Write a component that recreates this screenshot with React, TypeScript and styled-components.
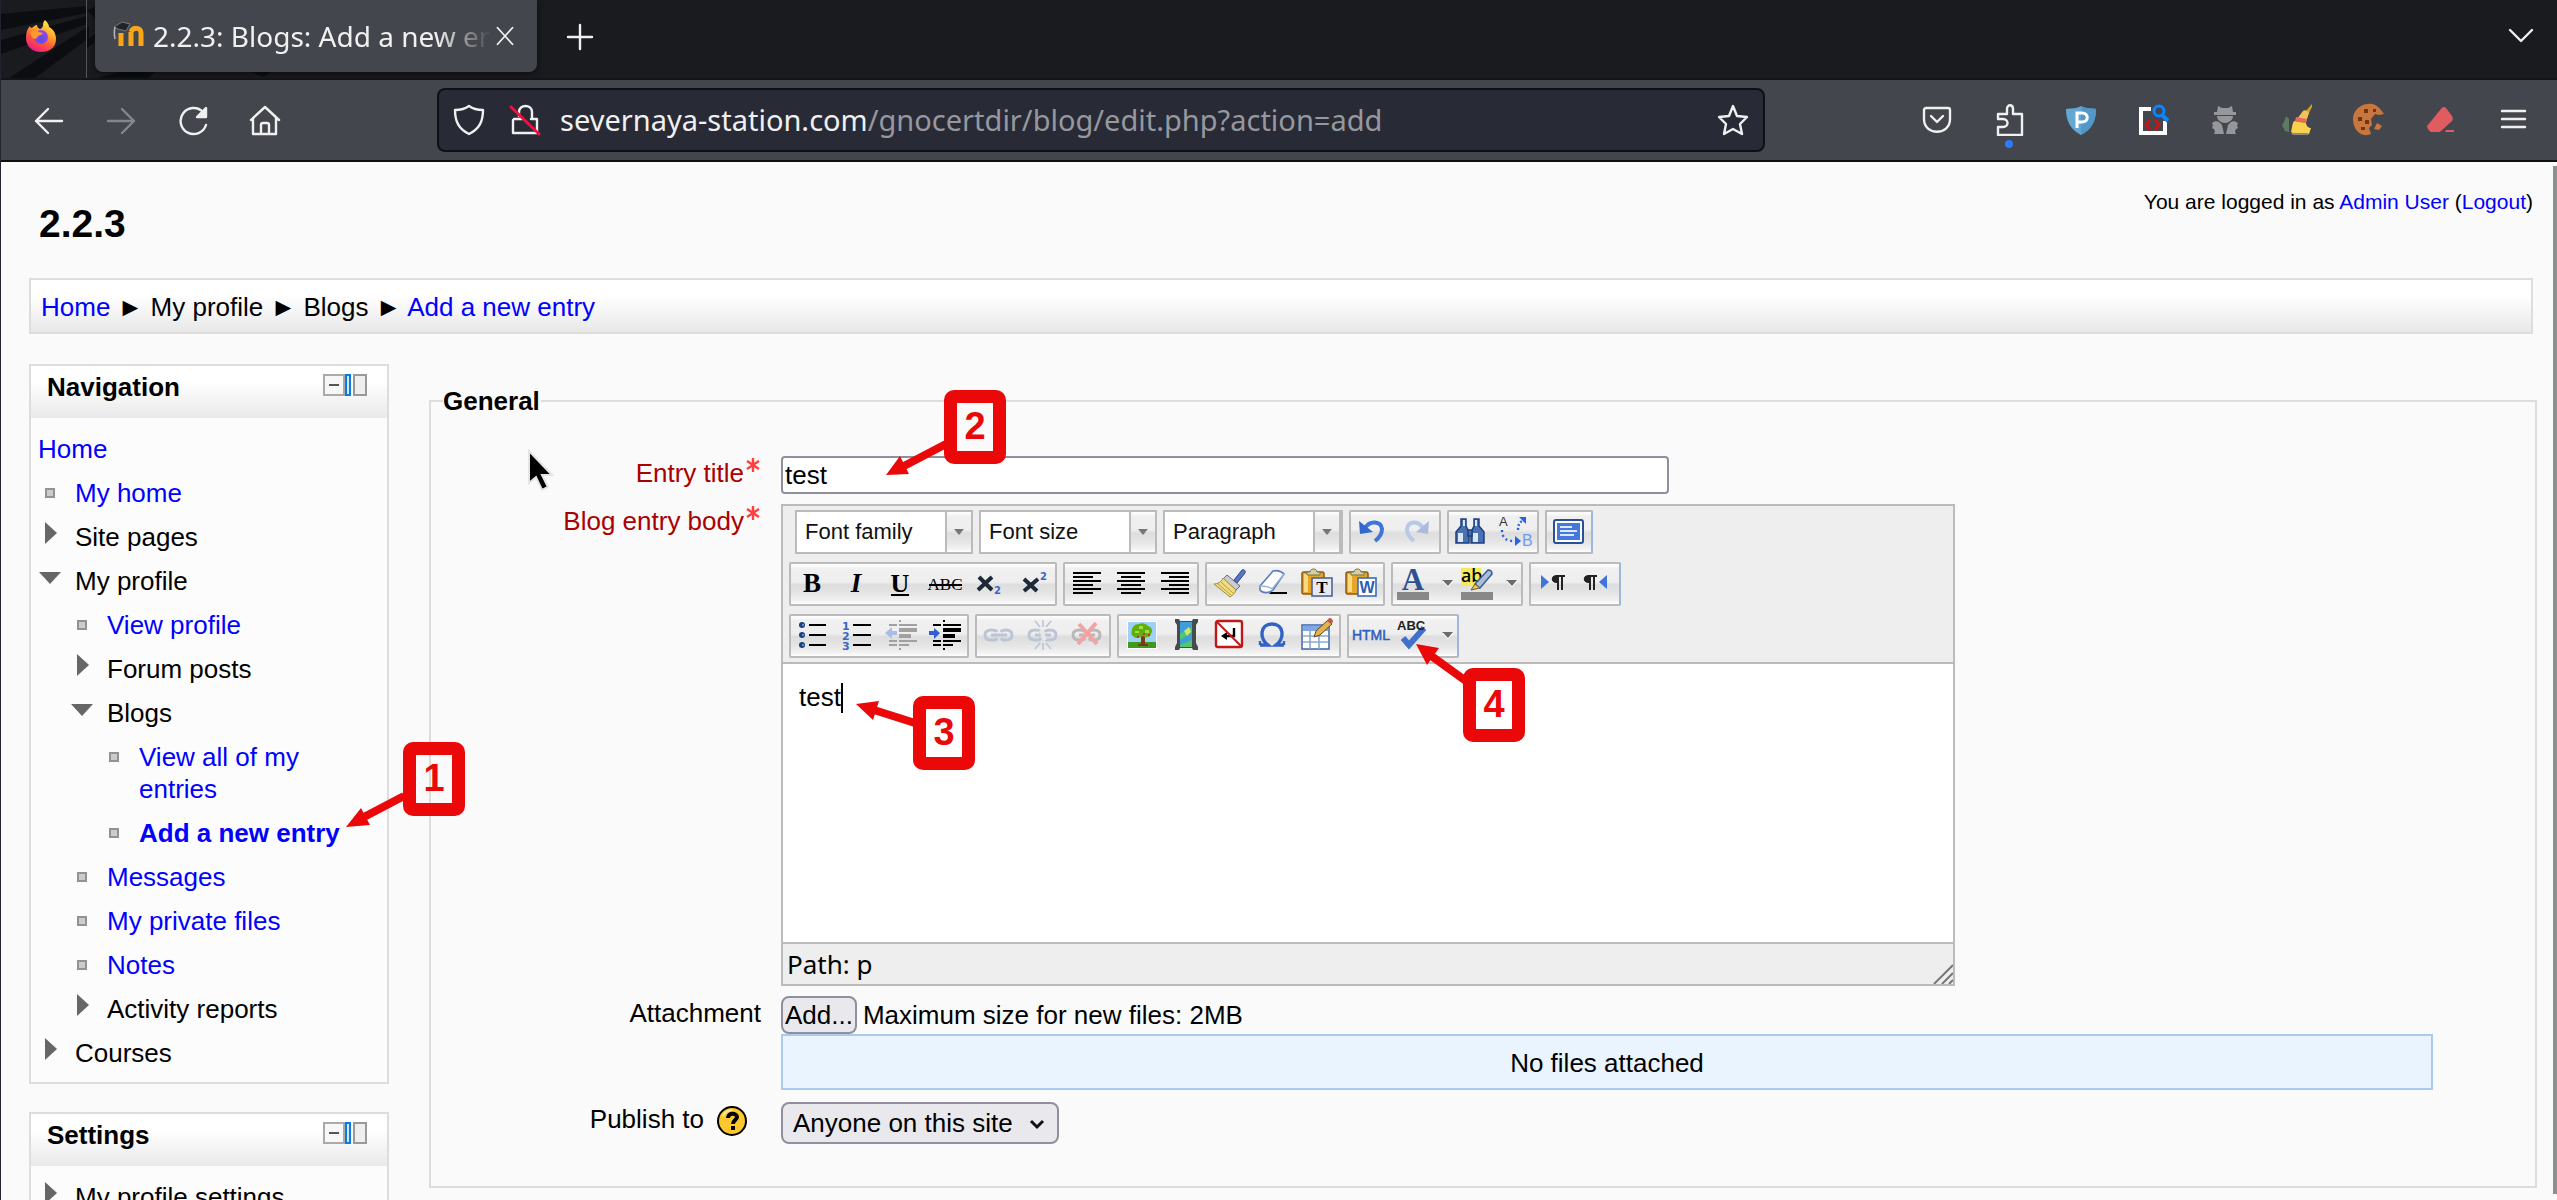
import React from "react";
import styled, { createGlobalStyle, css } from "styled-components";

const GlobalStyle = createGlobalStyle`
  *, *::before, *::after { box-sizing: border-box; }
  body { margin: 0; background: #fafafa; }
  button, input, select, textarea { font: inherit; color: inherit; margin: 0; }
`;

const sans = `"Liberation Sans", Arial, sans-serif`;
const ui = `"Noto Sans", "Open Sans", sans-serif`;

/* ---------- browser window ---------- */

const Window = styled.div`
  position: relative;
  display: flex;
  flex-direction: column;
  height: 100vh;
  overflow: hidden;
  border-left: 1px solid #23222f;
  background: #fafafa;
  font: 26px/32px ${sans};
  color: #000;
`;

const TabStrip = styled.div`
  position: relative;
  display: flex;
  flex: none;
  height: 80px;
  background: #1a1b1f;
  border-bottom: 2px solid #131418;
  color: #f0f0f0;
`;

const Wallpaper = styled.svg`
  position: absolute;
  left: 0;
  top: 0;
`;

const BrandCell = styled.div`
  position: relative;
  display: flex;
  align-items: center;
  justify-content: center;
  width: 86px;
  padding: 0 6px 6px 0;
  border-right: 1px solid #55565c;
`;

const Tab = styled.div`
  position: relative;
  display: flex;
  align-items: center;
  width: 442px;
  height: 72px;
  margin-left: 8px;
  padding: 0 18px;
  border-radius: 0 0 8px 8px;
  background: #44464d;
  box-shadow: 0 2px 6px #00000080;
`;

const TabTitle = styled.span`
  flex: 1;
  min-width: 0;
  margin-left: 8px;
  overflow: hidden;
  white-space: nowrap;
  font: 28px/40px ${ui};
  mask-image: linear-gradient(to right, #000 84%, transparent);
`;

const ChromeButton = styled.button<{ $w?: number }>`
  position: relative;
  display: flex;
  flex: none;
  align-items: center;
  justify-content: center;
  width: ${(p) => p.$w ?? 72}px;
  height: 72px;
  padding: 0;
  border: 0;
  background: none;
  color: #f0f0f0;

  &:disabled { color: #85868b; }
`;

const Spring = styled.span`
  flex: 1;
`;

const NavBar = styled.div`
  display: flex;
  flex: none;
  align-items: center;
  height: 82px;
  padding: 0 8px 0 12px;
  background: #44464d;
  border-bottom: 2px solid #0f1014;
`;

const AddressBar = styled.div`
  display: flex;
  flex: 1 1 auto;
  align-items: center;
  height: 64px;
  margin: 0 136px;
  padding: 0 14px;
  border: 2px solid #0f1014;
  border-radius: 8px;
  background: #282a36;
  color: #f0f0f0;
`;

const LockWrap = styled.span`
  display: flex;
  margin-left: 24px;
`;

const Url = styled.div`
  flex: 1;
  margin-left: 19px;
  font: 29px/40px ${ui};
  white-space: nowrap;

  span { color: #97989e; }
`;

const Actions = styled.div`
  display: flex;
`;

const ActiveDot = styled.i`
  position: absolute;
  bottom: 8px;
  left: 32px;
  width: 8px;
  height: 8px;
  border-radius: 50%;
  background: #2a7bff;
`;

const ScrollThumb = styled.div`
  position: absolute;
  top: 166px;
  right: 0;
  bottom: 6px;
  width: 4px;
  background: #8b908f;
`;

/* ---------- page ---------- */

const Link = styled.a<{ $bold?: boolean }>`
  color: #00f;
  text-decoration: none;
  font-weight: ${(p) => (p.$bold ? 700 : 400)};
`;

const PageHeader = styled.header`
  display: flex;
  flex: none;
  justify-content: space-between;
  align-items: flex-start;
  height: 116px;
  padding: 28px 24px 0 38px;
`;

const SiteTitle = styled.h1`
  margin: 10px 0 0;
  font-size: 39px;
  line-height: 48px;
`;

const LoginInfo = styled.div`
  font-size: 21px;
  line-height: 24px;
`;

const Breadcrumb = styled.nav`
  flex: none;
  margin: 0 24px 0 28px;
  padding: 11px 10px 9px;
  border: 2px solid #ddd;
  background: linear-gradient(#fff 30%, #e8e8e8);
`;

const Columns = styled.div`
  display: flex;
  align-items: flex-start;
  gap: 40px;
  margin: 30px 20px 0 28px;
`;

const Sidebar = styled.aside`
  display: flex;
  flex: none;
  flex-direction: column;
  gap: 28px;
  width: 360px;
`;

const Block = styled.section`
  border: 2px solid #ddd;
  background: #fcfcfc;
`;

const BlockHeader = styled.div`
  display: flex;
  justify-content: space-between;
  align-items: flex-start;
  height: 52px;
  padding: 5px 20px 0 16px;
  background: linear-gradient(#fff 30%, #e9e9e9);
`;

const BlockTitle = styled.h2`
  margin: 0;
  font-size: 26px;
  line-height: 32px;
`;

const BlockTools = styled.div`
  display: flex;
  padding-top: 3px;
`;

const ToolButton = styled.button`
  display: block;
  height: 22px;
  padding: 0;
  border: 0;
  background: none;

  svg { display: block; }
`;

const Tree = styled.ul`
  margin: 0;
  padding: 9px 9px 7px 7px;
  list-style: none;
`;

const TreeRow = styled.li<{ $level: number }>`
  display: flex;
  gap: 14px;
  padding: 6px 24px 6px ${(p) => Math.max(0, p.$level - 1) * 32}px;
`;

const Marker = styled.svg`
  flex: none;
  width: 22px;
  height: 32px;
  margin-left: 1px;
`;

/* ---------- form ---------- */

const Fieldset = styled.fieldset`
  flex: 1;
  min-width: 0;
  margin: 21px 0 0;
  padding: 39px 102px 42px 12px;
  border: 2px solid #ddd;
`;

const Legend = styled.legend`
  padding: 0 1px 0 0;
  font-weight: 700;
`;

const Form = styled.form`
  display: grid;
  grid-template-columns: 318px minmax(0, 1fr);
  gap: 10px 20px;
`;

const Label = styled.label<{ $required?: boolean }>`
  display: flex;
  justify-content: flex-end;
  gap: 2px;
  padding-top: 1px;
  color: ${(p) => (p.$required ? "#a00" : "#000")};
`;

const LabelCell = styled.div`
  display: flex;
  justify-content: flex-end;
  gap: 13px;
  padding-right: 14px;
`;

const HelpButton = styled.button`
  display: flex;
  height: 30px;
  margin-top: 4px;
  padding: 0;
  border: 0;
  background: none;
`;

const TextField = styled.input`
  width: 888px;
  max-width: 100%;
  height: 38px;
  padding: 0 2px;
  border: 2px solid #8f8f9d;
  border-radius: 4px;
  background: #fff;
`;

const Editor = styled.div`
  width: 1174px;
  max-width: 100%;
  border: 2px solid #bbb;
  background: #eee;
`;

const Toolbar = styled.div`
  display: flex;
  flex-direction: column;
  gap: 8px;
  padding: 4px 6px;
  border-bottom: 2px solid #bbb;
`;

const ToolRow = styled.div<{ $inset?: boolean }>`
  display: flex;
  gap: 6px;
  padding-left: ${(p) => (p.$inset ? 6 : 0)}px;
`;

const shade = css`
  background: linear-gradient(#fff, #f0f0f0 12%, #eee 45%, #ddd 52%, #e6e6e6 75%, #f2f2f2 92%, #fff);
`;

const Group = styled.div<{ $last?: boolean }>`
  display: flex;
  border: 2px solid #bbb;
  border-right-color: ${(p) => (p.$last ? "#9db8de" : "#bbb")};
  border-radius: 2px;
  ${shade}
`;

const IconButton = styled.button<{ $narrow?: boolean }>`
  display: block;
  width: ${(p) => (p.$narrow ? 20 : 44)}px;
  height: 40px;
  padding: 0;
  border: 0;
  background: none;

  svg {
    display: block;
    overflow: visible;
  }
`;

const ListBox = styled.div<{ $last?: boolean }>`
  display: grid;
  grid-template-columns: 1fr 26px;
  width: ${(p) => (p.$last ? 180 : 178)}px;
  height: 44px;
  border: 2px solid #bbb;
  border-right-width: ${(p) => (p.$last ? 4 : 2)}px;
  background: #fff;

  select {
    grid-area: 1 / 1 / 2 / 3;
    min-width: 0;
    padding: 0 0 0 8px;
    border: 0;
    background: none;
    appearance: none;
    font-size: 22px;
    color: #111;
  }
`;

const ListArrow = styled.span`
  grid-area: 1 / 2;
  display: flex;
  align-items: center;
  justify-content: center;
  border-left: 2px solid #bbb;
  pointer-events: none;
  ${shade}
`;

const Body = styled.div`
  height: 278px;
  padding: 17px 16px;
  background: #fff;
`;

const Caret = styled.i`
  display: inline-block;
  width: 2px;
  height: 30px;
  background: #000;
  vertical-align: -7px;
`;

const StatusBar = styled.div`
  display: flex;
  justify-content: space-between;
  align-items: flex-end;
  height: 42px;
  padding-left: 4px;
  border-top: 2px solid #bbb;
  font: 26px/40px ${ui};

  svg { display: block; }
`;

const FileArea = styled.div`
  padding-bottom: 2px;
`;

const FileRow = styled.div`
  display: flex;
  align-items: center;
  gap: 6px;
  height: 38px;
`;

const controlFace = css`
  border: 2px solid #8f8f9d;
  border-radius: 8px;
  background: #e9e9ed;
`;

const AddButton = styled.button`
  height: 38px;
  padding: 0 2px;
  ${controlFace}
`;

const FileList = styled.div`
  padding: 11px 10px 9px;
  border: 2px solid #a9cbee;
  background: #e9f4ff;
  text-align: center;
`;

const Picker = styled.div`
  display: grid;
  grid-template-columns: 1fr 42px;
  width: 278px;
  height: 42px;

  select {
    grid-area: 1 / 1 / 2 / 3;
    padding: 0 10px;
    appearance: none;
    ${controlFace}
  }
  svg {
    grid-area: 1 / 2;
    align-self: center;
    pointer-events: none;
  }
`;

/* ---------- callouts drawn over the page ---------- */

const Callout = styled.div<{ $x: number; $y: number }>`
  position: absolute;
  left: ${(p) => p.$x}px;
  top: ${(p) => p.$y}px;
  width: 62px;
  height: 74px;
  border: 13px solid #ea0808;
  border-radius: 10px;
  font-size: 38px;
  font-weight: 700;
  line-height: 46px;
  text-align: center;
  color: #ea0808;
`;

const Overlay = styled.svg<{ $x: number; $y: number }>`
  position: absolute;
  left: ${(p) => p.$x}px;
  top: ${(p) => p.$y}px;
  pointer-events: none;
`;

/* ---------- icons ---------- */

const line = { fill: "none", stroke: "currentColor", strokeWidth: 2.4, strokeLinecap: "round", strokeLinejoin: "round" } as const;

const Chrome = ({ children, size = 32 }: { children: React.ReactNode; size?: number }) => (
  <svg width={size} height={size} viewBox="0 0 32 32" aria-hidden="true" {...line}>{children}</svg>
);

const Firefox = () => (
  <svg width="34" height="34" viewBox="0 0 34 34" aria-hidden="true">
    <defs>
      <linearGradient id="ffBody" x1="0.8" y1="0" x2="0.3" y2="1">
        <stop offset="0" stopColor="#fff44f" />
        <stop offset="0.35" stopColor="#ffb02e" />
        <stop offset="0.65" stopColor="#ff5a36" />
        <stop offset="1" stopColor="#f0168b" />
      </linearGradient>
      <radialGradient id="ffGlobe" cx="0.5" cy="0.7" r="0.7">
        <stop offset="0" stopColor="#5b4fe0" />
        <stop offset="1" stopColor="#a044e8" />
      </radialGradient>
    </defs>
    <path d="M21 1c3 3 4 5 4 7 4 2 7 6 7 12 0 8-6 13-15 13S2 27 2 19c0-5 1-9 4-12 0 1 1 2 2 2 1-1 3-3 5-3 0 2 1 3 3 4 1 0 2-1 3-3 0-2 0-4 2-6z" fill="url(#ffBody)" />
    <circle cx="17" cy="18" r="7" fill="url(#ffGlobe)" />
    <path d="M7 12c3-2 6-1 8 1l4 1c-1 2-4 2-5 3-1 2-2 4-5 2-2-2-3-5-2-7z" fill="#ff9a2e" />
  </svg>
);

const MoodleMark = () => (
  <svg width="32" height="34" viewBox="0 0 32 34" aria-hidden="true" fill="none">
    <path d="M8 27V14M18 27V13M28 27V14c0-6-8-6-10-1" stroke="#f9a51a" strokeWidth="5" />
    <path d="M1 8l8-5 8 2-4 7-8-2z" fill="#222327" stroke="#777980" strokeWidth="1" />
    <path d="M2 8c-1 4-1 7 0 12" stroke="#b5b7bc" strokeWidth="1.5" />
  </svg>
);

const Tool = ({ w = 44, children }: { w?: number; children: React.ReactNode }) => (
  <svg width={w} height="40" viewBox={`0 0 ${w} 40`} aria-hidden="true">{children}</svg>
);

const serif = `"Liberation Serif", serif`;
const blue = "#2f5fc0";
const navy = "#1c3f80";

const Rows = ({ kind }: { kind: "left" | "center" | "right" }) => (
  <Tool>
    {[8, 12, 16, 20, 24, 28].map((y, i) => {
      const short = i % 2 === 1;
      const x = !short || kind === "left" ? 8 : kind === "center" ? 12 : 16;
      return <rect key={y} x={x} y={y} width={short ? 20 : 28} height="2" />;
    })}
  </Tool>
);

const Dent = ({ dir, muted }: { dir: "in" | "out"; muted?: boolean }) => (
  <Tool>
    <g fill={muted ? "#a0a0a0" : "#000"}>
      <path d="M20 4h2v2h-2zM10 8h8v2h-8zM20 8h18v2H20zM20 12h18v4H20zM20 18h12v4H20zM10 24h8v2h-8zM20 24h18v2H20zM10 28h8v2h-8zM20 28h10v2H20zM20 32h2v2h-2z" />
      <path
        d={dir === "in" ? "M6 15h5v-3l6 5-6 6v-4H6z" : "M18 15h-5v-4l-7 6 7 6v-4h5z"}
        fill={muted ? "#a9bce6" : "#2f5fd0"}
      />
    </g>
  </Tool>
);

const Chain = ({ color }: { color: string }) => (
  <g fill="none" stroke={color} strokeWidth="3">
    <path d="M20 16c-1-2-3-2-6-2-4 0-6 2-6 5s2 5 6 5 5 0 6-2M24 16c1-2 3-2 5-2 4 0 6 2 6 5s-2 5-6 5-4 0-5-2" />
    <path d="M14 19h16" />
  </g>
);

const Clipboard = ({ children }: { children: React.ReactNode }) => (
  <Tool>
    <rect x="7" y="8" width="22" height="22" rx="2" fill="#e5a62a" stroke="#8a5a12" strokeWidth="1.5" />
    <path d="M9 10h4v18H9z" fill="#f9d97b" />
    <path d="M12 11V8h3c0-4 7-4 7 0h3v3z" fill="#d8cf9c" stroke="#7a7148" />
    {children}
  </Tool>
);

const Undo = () => (
  <Tool>
    <path d="M14 16c5-8 16-7 17 1 0 5-3 9-7 12" fill="none" stroke="#3f74d8" strokeWidth="4" />
    <path d="M8 9l1 13 13-2z" fill="#3468cf" />
  </Tool>
);

const Redo = () => (
  <Tool>
    <path d="M28 16c-5-8-15-7-16 1 0 5 3 9 7 12" fill="none" stroke="#b8c8e6" strokeWidth="4" />
    <path d="M34 9l-1 13-12-2z" fill="#a9bce0" />
  </Tool>
);

const Find = () => (
  <Tool>
    <g fill="#4a72b0" stroke={navy} strokeWidth="1.5">
      <path d="M12 7h5v7l3 6v11H7V20l5-6zM25 7h5v7l5 6v11H22V20l3-6z" />
      <path d="M19 18h4v6h-4z" />
    </g>
    <path d="M9 21h5v9H9zM24 21h5v9h-5zM14 8h2v6h-2zM26 8h2v6h-2z" fill="#dbe7f8" />
  </Tool>
);

const Replace = () => (
  <Tool>
    <text x="6" y="14" fontFamily={sans} fontSize="13" fill="#333">A</text>
    <text x="29" y="34" fontFamily={sans} fontSize="16" fill="#6f9bef">B</text>
    <path d="M9 18c0 7 3 11 12 11" fill="none" stroke="#2a62e0" strokeWidth="2.4" strokeDasharray="2 3" />
    <path d="M25 18c0-4 1-7 4-9" fill="none" stroke="#2a62e0" strokeWidth="2.4" strokeDasharray="2 2" />
    <path d="M26 5h7v7zM22 24l6 5-6 5z" fill="#2a62e0" />
  </Tool>
);

const Fullscreen = () => (
  <Tool>
    <rect x="7" y="8" width="29" height="23" rx="2" fill="#fff" stroke="#274f9c" strokeWidth="2" />
    <rect x="10" y="11" width="23" height="17" fill="#4478dc" />
    <path d="M13 14h12v2H13zM13 18h17v2H13zM13 22h14v2H13z" fill="#dce8ff" />
  </Tool>
);

const Brush = () => (
  <Tool>
    <path d="M27 16l8-10c2-1 4 1 3 3l-8 10z" fill="#5577c8" stroke="#33457c" />
    <path d="M20 11l13 11-4 4-13-11z" fill="#c8ccd4" stroke="#666c78" />
    <path d="M16 14l13 12c-1 3-3 5-6 7L7 20c4 0 7-2 9-6z" fill="#f0dc84" stroke="#a08a36" />
    <path d="M11 20l13 11M14 18l12 11" stroke="#b89c3c" />
  </Tool>
);

const Eraser = () => (
  <Tool>
    <path d="M9 22L22 7c4-1 8 0 11 3L22 26c-4 4-11 3-13 0z" fill="#fff" stroke="#5b7fb8" strokeWidth="1.6" />
    <path d="M9 22c4 0 9 0 12 3L33 10" fill="none" stroke="#9bb5dc" strokeWidth="1.4" />
    <path d="M20 28h16v2H18z" />
  </Tool>
);

const BulletList = () => (
  <Tool>
    {[9, 19, 29].map((y) => (
      <g key={y}>
        <circle cx="11" cy={y} r="3" fill={navy} />
        <circle cx="12" cy={y} r="1" fill="#7fa3e0" />
        <rect x="18" y={y - 1} width="17" height="2" />
      </g>
    ))}
  </Tool>
);

const NumberList = () => (
  <Tool>
    {[9, 19, 29].map((y, i) => (
      <g key={y}>
        <text x="7" y={y + 5} fontFamily={`"DejaVu Sans", sans-serif`} fontWeight="700" fontSize="11" fill="#3a66c8">{i + 1}</text>
        <rect x="18" y={y - 1} width="18" height="2" />
      </g>
    ))}
  </Tool>
);

const Unlink = () => (
  <Tool>
    <Chain color="#bcc5d6" />
    <path d="M20 14l4 10" stroke="#e8e8e8" strokeWidth="4" />
    <path d="M22 4v7M14 5l5 6M30 5l-5 6M22 34v-7M14 33l5-6M30 33l-5-6" stroke="#bcc5d6" strokeWidth="1.6" />
  </Tool>
);

const NoLink = () => (
  <Tool>
    <Chain color="#b9b9b9" />
    <path d="M14 8l18 20M31 7L13 28" stroke="#f2a3a3" strokeWidth="4" />
  </Tool>
);

const Picture = () => (
  <Tool>
    <rect x="8" y="5" width="30" height="28" fill="#fff" />
    <rect x="9" y="6" width="28" height="26" fill="#9fd0f7" />
    <rect x="9" y="26" width="28" height="6" fill="#3d9a1c" />
    <path d="M22 18h4v10h3v2H19v-2h3z" fill="#7a3a14" />
    <path d="M13 14c0-3 3-6 7-6 3-2 8 0 9 2 4 1 5 5 3 8-1 4-6 4-8 2-3 2-8 3-10 0-2-1-2-4-1-6z" fill="#5fae12" />
    <path d="M20 10h4v3h-4zM26 14h4v3h-4zM16 15h4v2h-4z" fill="#a4dd3a" />
    <path d="M18 20h2v2h-2zM29 18h2v2h-2zM24 17h2v2h-2z" fill="#c33" />
  </Tool>
);

const Film = () => (
  <Tool>
    <path d="M12 3h4l1 2h12l1-2h5v3l-2 3v18l2 4v3h-5l-1-2H17l-1 2h-4v-3l2-4V9l-2-3z" fill="#444c50" />
    <rect x="17" y="6" width="12" height="25" fill="#55c76a" />
    <path d="M17 6h12v5L17 18zM29 16v8l-12 5v-5z" fill="#3e9fd8" />
    <path d="M21 15l5-4 2 5-4 4z" fill="#c8e86a" />
  </Tool>
);

const NonBreaking = () => (
  <Tool>
    <rect x="9" y="5" width="26" height="26" rx="2" fill="#fff" stroke="#c01818" strokeWidth="2.4" />
    <path d="M27 12v8H19" fill="none" stroke="#000" strokeWidth="2.4" />
    <path d="M14 20l6-4v8z" />
    <path d="M10 6l24 24" stroke="#c01818" strokeWidth="2" />
  </Tool>
);

const Omega = () => (
  <Tool>
    <path d="M9 29h8c-9-7-8-21 4-21s13 14 4 21h8" fill="none" stroke="#3263c4" strokeWidth="3.4" />
    <path d="M9 29v-4M33 29v-4" stroke="#3263c4" strokeWidth="2.4" />
  </Tool>
);

const TableEdit = () => (
  <Tool>
    <rect x="7" y="9" width="27" height="24" fill="#fff" stroke="#4a6fae" strokeWidth="1.6" />
    <rect x="8" y="10" width="25" height="5" fill="#7fa6e6" />
    <path d="M8 20h25M8 26h25M15 15v18M24 15v18" stroke="#8ba6d4" strokeWidth="1.6" />
    <path d="M19 21l2-6L33 4l4 4-12 11z" fill="#e4b44a" stroke="#5a4820" />
    <path d="M32 5l2-3c3 0 4 2 4 4l-2 2z" fill="#c05a4c" />
  </Tool>
);

const Spell = () => (
  <Tool>
    <path d="M10 22l6 7L31 12" fill="none" stroke="#4070cc" strokeWidth="6" />
    <text x="4" y="14" fontFamily={sans} fontWeight="700" fontSize="13" fill="#222">ABC</text>
  </Tool>
);

const TextColor = () => (
  <Tool>
    <text x="20" y="26" textAnchor="middle" fontFamily={serif} fontWeight="700" fontSize="31" fill="#2d528f">A</text>
    <rect x="4" y="28" width="32" height="8" fill="#888" />
  </Tool>
);

const Highlight = () => (
  <Tool>
    <rect x="4" y="4" width="20" height="18" fill="#f2ea5c" />
    <text x="4" y="18" fontFamily={ui} fontWeight="500" fontSize="18">ab</text>
    <path d="M18 20L31 6c3 0 4 2 4 4L23 24z" fill="#a9bedd" stroke="#3d5f92" strokeWidth="1.6" />
    <path d="M18 20l5 4-9 2z" fill="#e8c860" stroke="#6c5a1c" />
    <rect x="4" y="28" width="32" height="8" fill="#888" />
  </Tool>
);

const Drop = () => (
  <Tool w={20}>
    <path d="M5 16h11l-5 6z" fill="#6c6c6c" />
    <path d="M6 17l5 6 5-6" fill="none" stroke="#fff" strokeOpacity="0.8" />
  </Tool>
);

const Script = ({ sup }: { sup?: boolean }) => (
  <Tool>
    <path d={sup ? "M13 15l13 12M27 15L13 27" : "M12 13l13 13M25 13L11 26"} stroke="#1d2838" strokeWidth="4" />
    <text x={sup ? 29 : 27} y={sup ? 16 : 30} fontFamily={`"DejaVu Sans", sans-serif`} fontWeight="700" fontSize="10" fill="#3a66c8">2</text>
  </Tool>
);

const Glyph = ({ children, italic, size = 27 }: { children: string; italic?: boolean; size?: number }) => (
  <text x="21" y="28" textAnchor="middle" fontFamily={serif} fontWeight="700" fontStyle={italic ? "italic" : "normal"} fontSize={size}>
    {children}
  </text>
);

type ToolDef = { label: string; icon: React.ReactNode; narrow?: boolean };

const row1: ToolDef[][] = [
  [{ label: "Undo", icon: <Undo /> }, { label: "Redo", icon: <Redo /> }],
  [{ label: "Find", icon: <Find /> }, { label: "Find/Replace", icon: <Replace /> }],
  [{ label: "Toggle fullscreen mode", icon: <Fullscreen /> }],
];

const row2: ToolDef[][] = [
  [
    { label: "Bold", icon: <Tool><Glyph>B</Glyph></Tool> },
    { label: "Italic", icon: <Tool><Glyph italic>I</Glyph></Tool> },
    { label: "Underline", icon: <Tool><Glyph size={26}>U</Glyph><rect x="12" y="30" width="18" height="2" /></Tool> },
    {
      label: "Strikethrough",
      icon: (
        <Tool>
          <text x="22" y="26" textAnchor="middle" fontFamily={serif} fontSize="17">ABC</text>
          <rect x="6" y="20" width="33" height="2" />
        </Tool>
      ),
    },
    { label: "Subscript", icon: <Script /> },
    { label: "Superscript", icon: <Script sup /> },
  ],
  [
    { label: "Align left", icon: <Rows kind="left" /> },
    { label: "Align center", icon: <Rows kind="center" /> },
    { label: "Align right", icon: <Rows kind="right" /> },
  ],
  [
    { label: "Cleanup messy code", icon: <Brush /> },
    { label: "Remove formatting", icon: <Eraser /> },
    {
      label: "Paste as Plain Text",
      icon: (
        <Clipboard>
          <rect x="17" y="14" width="20" height="18" fill="#e4ebf5" stroke="#50648c" strokeWidth="1.6" />
          <text x="27" y="29" textAnchor="middle" fontFamily={serif} fontWeight="700" fontSize="17">T</text>
        </Clipboard>
      ),
    },
    {
      label: "Paste from Word",
      icon: (
        <Clipboard>
          <rect x="19" y="14" width="18" height="18" fill="#fff" stroke="#3f6cb8" strokeWidth="1.6" />
          <text x="28" y="29" textAnchor="middle" fontFamily={sans} fontWeight="700" fontSize="16" fill="#2b5cb4">W</text>
        </Clipboard>
      ),
    },
  ],
  [
    { label: "Select text color", icon: <TextColor /> },
    { label: "Text color options", icon: <Drop />, narrow: true },
    { label: "Select background color", icon: <Highlight /> },
    { label: "Background color options", icon: <Drop />, narrow: true },
  ],
  [
    {
      label: "Direction left to right",
      icon: <Tool><path d="M10 11l8 7-8 7z" fill="#3f74d8" /><path d="M34 11v2h-2v13h-2V13h-2v13h-2v-7c-7 0-7-8 0-8z" fill="#222" /></Tool>,
    },
    {
      label: "Direction right to left",
      icon: <Tool><path d="M32 11l-8 7 8 7z" fill="#3f74d8" /><path d="M22 11v2h-2v13h-2V13h-2v13h-2v-7c-7 0-7-8 0-8z" fill="#222" /></Tool>,
    },
  ],
];

const row3: ToolDef[][] = [
  [
    { label: "Unordered list", icon: <BulletList /> },
    { label: "Ordered list", icon: <NumberList /> },
    { label: "Outdent", icon: <Dent dir="out" muted /> },
    { label: "Indent", icon: <Dent dir="in" /> },
  ],
  [
    { label: "Insert/edit link", icon: <Tool><Chain color="#bcc5d6" /></Tool> },
    { label: "Unlink", icon: <Unlink /> },
    { label: "Prevent automatic linking", icon: <NoLink /> },
  ],
  [
    { label: "Insert/edit image", icon: <Picture /> },
    { label: "Insert Moodle media", icon: <Film /> },
    { label: "Insert non-breaking space", icon: <NonBreaking /> },
    { label: "Insert custom character", icon: <Omega /> },
    { label: "Insert a new table", icon: <TableEdit /> },
  ],
  [
    {
      label: "Edit HTML source",
      icon: <Tool><text x="22" y="24" textAnchor="middle" fontFamily={sans} fontSize="14" fill={blue} stroke={blue} strokeWidth="0.5">HTML</text></Tool>,
    },
    { label: "Toggle spellchecker", icon: <Spell /> },
    { label: "Spellchecker languages", icon: <Drop />, narrow: true },
  ],
];

const Groups = ({ groups }: { groups: ToolDef[][] }) => (
  <>
    {groups.map((g, i) => (
      <Group key={i} $last={i === groups.length - 1}>
        {g.map((t) => (
          <IconButton key={t.label} type="button" aria-label={t.label} $narrow={t.narrow}>{t.icon}</IconButton>
        ))}
      </Group>
    ))}
  </>
);

const ToolSelect = ({ label, last }: { label: string; last?: boolean }) => (
  <ListBox $last={last}>
    <select aria-label={label} defaultValue={label}><option>{label}</option></select>
    <ListArrow>
      <svg width="12" height="8" viewBox="0 0 12 8" aria-hidden="true"><path d="M1 1h10L6 7z" fill="#777" /></svg>
    </ListArrow>
  </ListBox>
);

/* ---------- navigation tree ---------- */

type MarkerKind = "leaf" | "closed" | "open";
type Item = { text: string; level: number; kind?: MarkerKind; link?: boolean; bold?: boolean };

const navigation: Item[] = [
  { text: "Home", level: 0, link: true },
  { text: "My home", level: 1, kind: "leaf", link: true },
  { text: "Site pages", level: 1, kind: "closed" },
  { text: "My profile", level: 1, kind: "open" },
  { text: "View profile", level: 2, kind: "leaf", link: true },
  { text: "Forum posts", level: 2, kind: "closed" },
  { text: "Blogs", level: 2, kind: "open" },
  { text: "View all of my entries", level: 3, kind: "leaf", link: true },
  { text: "Add a new entry", level: 3, kind: "leaf", link: true, bold: true },
  { text: "Messages", level: 2, kind: "leaf", link: true },
  { text: "My private files", level: 2, kind: "leaf", link: true },
  { text: "Notes", level: 2, kind: "leaf", link: true },
  { text: "Activity reports", level: 2, kind: "closed" },
  { text: "Courses", level: 1, kind: "closed" },
];

const settings: Item[] = [{ text: "My profile settings", level: 1, kind: "closed" }];

const NodeMarker = ({ kind }: { kind: MarkerKind }) => (
  <Marker viewBox="0 0 22 32" aria-hidden="true">
    {kind === "leaf" && <rect x="7" y="12" width="8" height="8" fill="#ccc" stroke="#929292" strokeWidth="2" />}
    {kind === "closed" && <path d="M6 1v22l12-11z" fill="#666" />}
    {kind === "open" && <path d="M0 7h22L11 19z" fill="#666" />}
  </Marker>
);

const TreeBlock = ({ title, items }: { title: string; items: Item[] }) => (
  <Block>
    <BlockHeader>
      <BlockTitle>{title}</BlockTitle>
      <BlockTools>
        <ToolButton aria-label={`Hide ${title} block`}>
          <svg width="22" height="22" viewBox="0 0 22 22" aria-hidden="true">
            <rect x="1" y="1" width="20" height="20" fill="#f7f7f7" stroke="#aaa" strokeWidth="2" />
            <path d="M6 10h10v2H6z" fill="#555" />
          </svg>
        </ToolButton>
        <ToolButton aria-label={`Dock ${title} block`}>
          <svg width="22" height="22" viewBox="0 0 22 22" aria-hidden="true">
            <rect x="1" y="1" width="4" height="20" fill="#cfe6fb" stroke="#0a7be0" strokeWidth="2" />
            <rect x="9" y="1" width="12" height="20" fill="#eee" stroke="#999" strokeWidth="2" />
          </svg>
        </ToolButton>
      </BlockTools>
    </BlockHeader>
    <Tree>
      {items.map((it) => (
        <TreeRow key={it.text} $level={it.level}>
          {it.kind && <NodeMarker kind={it.kind} />}
          {it.link ? <Link href="#" $bold={it.bold}>{it.text}</Link> : <span>{it.text}</span>}
        </TreeRow>
      ))}
    </Tree>
  </Block>
);

const RequiredStar = () => (
  <svg width="15" height="16" viewBox="0 0 15 16" role="img" aria-label="Required field">
    <path d="M7 1v14M1 4l12 8M13 4L1 12" stroke="#ff4040" strokeWidth="2.4" />
  </svg>
);

export default function App() {
  return (
    <Window>
      <GlobalStyle />
      <TabStrip>
        <Wallpaper width="330" height="78" viewBox="0 0 330 78" aria-hidden="true">
          <path d="M0 14L86 6v7L0 30zM0 40l86-24v8L0 54zM8 78l80-52v12L34 78zM86 10l10 10v-14zM86 48l8-6v-8l-8 6zM98 78l20-6h36l-6 6zM250 72h20l-8 5z" fill="#0c0d10" />
        </Wallpaper>
        <BrandCell><Firefox /></BrandCell>
        <Tab>
          <MoodleMark />
          <TabTitle>2.2.3: Blogs: Add a new entry</TabTitle>
          <ChromeButton $w={28} aria-label="Close tab">
            <Chrome size={24}><path d="M6 5l20 22M26 5L6 27" /></Chrome>
          </ChromeButton>
        </Tab>
        <ChromeButton $w={86} aria-label="New tab">
          <Chrome size={32}><path d="M16 5v24M4 17h24" /></Chrome>
        </ChromeButton>
        <Spring />
        <ChromeButton aria-label="List all tabs">
          <Chrome><path d="M5 10l11 11 11-11" /></Chrome>
        </ChromeButton>
      </TabStrip>

      <NavBar>
        <ChromeButton aria-label="Back"><Chrome><path d="M29 17H3M15 5L3 17l12 12" /></Chrome></ChromeButton>
        <ChromeButton aria-label="Forward" disabled><Chrome><path d="M3 17h26M17 5l12 12-12 12" /></Chrome></ChromeButton>
        <ChromeButton aria-label="Reload">
          <Chrome><path d="M29 21a13 13 0 1 1-3-13" /><path d="M29 4v9h-9z" fill="currentColor" /></Chrome>
        </ChromeButton>
        <ChromeButton aria-label="Home">
          <Chrome><path d="M2 16L16 3l14 13M4 14v16h23V14M12 30V21c0-1 1-2 2-2h4c1 0 2 1 2 2v9" /></Chrome>
        </ChromeButton>
        <AddressBar>
          <Chrome><path d="M16 2c4 3 9 4 14 4 0 12-4 19-14 24C6 25 2 18 2 6c5 0 10-1 14-4z" /></Chrome>
          <LockWrap>
            <Chrome>
              <path d="M10 12V8c0-8 13-8 13 0v6M5 15h8M22 15h6v14H4V16" />
              <path d="M2 3l28 27" stroke="#f0103f" strokeWidth="3" />
            </Chrome>
          </LockWrap>
          <Url>severnaya-station.com<span>/gnocertdir/blog/edit.php?action=add</span></Url>
          <Chrome><path d="M16 2l4 10 10 1-7 7 2 10-9-5-9 5 2-10-7-7 10-1z" /></Chrome>
        </AddressBar>
        <Actions>
          <ChromeButton aria-label="Save to Pocket">
            <Chrome><path d="M3 6c0-1 1-2 2-2h22c1 0 2 1 2 2v9c0 17-26 17-26 0zM10 12l6 6 6-6" /></Chrome>
          </ChromeButton>
          <ChromeButton aria-label="Extensions">
            <Chrome><path d="M5 31V23h5c6 0 6-8 0-8H5V10h9V5c0-5 6-5 6 0v5h9v21z" /></Chrome>
            <ActiveDot />
          </ChromeButton>
          <ChromeButton aria-label="Privacy shield">
            <svg width="32" height="32" viewBox="0 0 32 32" aria-hidden="true">
              <path d="M16 2c5 3 10 2 15 3 0 10-3 20-15 26C4 25 1 15 1 5c5-1 10 0 15-3z" fill="#63a8d2" />
              <path d="M16 2c5 3 10 2 15 3 0 10-3 20-15 26z" fill="#4f98c8" />
              <path d="M12 24V9h5c7 0 7 9 0 9h-4" fill="none" stroke="#fff" strokeWidth="3" />
            </svg>
          </ChromeButton>
          <ChromeButton aria-label="Source viewer">
            <svg width="34" height="34" viewBox="0 0 34 34" aria-hidden="true" fill="none">
              <path d="M15 6H5v24h24V18" stroke="#fff" strokeWidth="4" />
              <circle cx="23" cy="8" r="5" stroke="#0a84ff" strokeWidth="3" />
              <path d="M26 12l6 6" stroke="#0a84ff" strokeWidth="4" />
              <path d="M14 17l-4 5 4 5M19 17l4 5-4 5" stroke="#c81414" strokeWidth="3" />
            </svg>
          </ChromeButton>
          <ChromeButton aria-label="Agent switcher">
            <svg width="28" height="30" viewBox="0 0 28 30" aria-hidden="true" fill="#96979a">
              <path d="M7 1l4 2h6l4-2 1 6h3v3H3V7h3zM6 11h16c0 4-4 7-8 7s-8-3-8-7zM1 18c4-3 7-2 10 2l2 9H3c2-4 0-5-2-6 1-2 1-3 0-5zM27 18c-4-3-7-2-10 2l-2 9h10c-2-4 0-5 2-6-1-2-1-3 0-5z" />
            </svg>
          </ChromeButton>
          <ChromeButton aria-label="Clear cache">
            <svg width="32" height="32" viewBox="0 0 32 32" aria-hidden="true">
              <path d="M31 0v3l-4 8-4-2z" fill="#d0a020" />
              <path d="M16 15l6-8c2-2 5 0 6 2l-3 9z" fill="#f3c25c" />
              <path d="M15 13l11 2-1 4-11-2z" fill="#ea6a58" />
              <path d="M13 17l12 2c0 3 3 5 5 5l-2 6c-7 2-14 1-18-2 1-4 1-8 3-11z" fill="#fad14c" />
              <path d="M5 12l3 3v13l-4-1-3-6 2-3z" fill="#5e7a64" />
              <path d="M10 29h17v2H12z" fill="#8a8a84" />
            </svg>
          </ChromeButton>
          <ChromeButton aria-label="Cookie editor">
            <svg width="34" height="34" viewBox="0 0 34 34" aria-hidden="true">
              <path d="M16 1c5-1 10 2 13 6l3 4-5 1-4-1-4 5 1 6-3 3 2 6C10 35 1 28 1 16 1 8 8 1 16 1z" fill="#c8763c" />
              <path d="M25 20l5 3-3 4-5-1z" fill="#c8763c" />
              <path d="M12 6h4v4h-4zM6 14h4v4H6zM13 17h4v4h-4zM21 6h3v3h-3zM9 24h4v3H9z" fill="#6c3714" />
            </svg>
          </ChromeButton>
          <ChromeButton aria-label="Eraser">
            <svg width="30" height="28" viewBox="0 0 30 28" aria-hidden="true" fill="#e05c60">
              <path d="M15 3c1-2 3-3 5-1l6 8c1 2 1 3 0 5L15 25c-1 1-2 1-3 1H5c-2-1-4-4-4-6z" />
              <path d="M20 24h8v2h-9z" />
            </svg>
          </ChromeButton>
          <ChromeButton aria-label="Open application menu">
            <Chrome><path d="M5 7h23M5 15h23M5 23h23" /></Chrome>
          </ChromeButton>
        </Actions>
      </NavBar>

      <PageHeader>
        <SiteTitle>2.2.3</SiteTitle>
        <LoginInfo>
          You are logged in as <Link href="#">Admin User</Link> (<Link href="#">Logout</Link>)
        </LoginInfo>
      </PageHeader>

      <Breadcrumb aria-label="Breadcrumb">
        <Link href="#">Home</Link> ► My profile ► Blogs ► <Link href="#">Add a new entry</Link>
      </Breadcrumb>

      <Columns>
        <Sidebar>
          <TreeBlock title="Navigation" items={navigation} />
          <TreeBlock title="Settings" items={settings} />
        </Sidebar>

        <Fieldset>
          <Legend>General</Legend>
          <Form onSubmit={(e) => e.preventDefault()}>
            <Label htmlFor="title" $required>Entry title<RequiredStar /></Label>
            <TextField id="title" type="text" defaultValue="test" />

            <Label as="div" id="bodyLabel" $required>Blog entry body<RequiredStar /></Label>
            <Editor>
              <Toolbar>
                <ToolRow $inset>
                  <ToolSelect label="Font family" />
                  <ToolSelect label="Font size" />
                  <ToolSelect label="Paragraph" last />
                  <Groups groups={row1} />
                </ToolRow>
                <ToolRow><Groups groups={row2} /></ToolRow>
                <ToolRow><Groups groups={row3} /></ToolRow>
              </Toolbar>
              <Body role="textbox" aria-multiline="true" aria-labelledby="bodyLabel">test<Caret /></Body>
              <StatusBar>
                <span>Path: p</span>
                <svg width="20" height="20" viewBox="0 0 20 20" aria-hidden="true">
                  <path d="M1 20L20 1M9 20L20 9M16 20l4-4" stroke="#777" strokeWidth="2" />
                </svg>
              </StatusBar>
            </Editor>

            <Label htmlFor="attach">Attachment</Label>
            <FileArea>
              <FileRow>
                <AddButton id="attach" type="button">Add...</AddButton>
                <span>Maximum size for new files: 2MB</span>
              </FileRow>
              <FileList>No files attached</FileList>
            </FileArea>

            <LabelCell>
              <Label htmlFor="publish">Publish to</Label>
              <HelpButton type="button" aria-label="Help with Publish to">
                <svg width="30" height="30" viewBox="0 0 30 30" aria-hidden="true">
                  <circle cx="15" cy="15" r="14" fill="#fdc72f" stroke="#000" strokeWidth="2" />
                  <path d="M6 10c2-4 6-6 9-6" stroke="#ffe9a0" strokeWidth="2" fill="none" />
                  <path d="M11 12c0-6 9-5 9-1 0 3-4 3-4 7" fill="none" stroke="#000" strokeWidth="4" />
                  <rect x="14" y="20" width="4" height="4" />
                </svg>
              </HelpButton>
            </LabelCell>
            <Picker>
              <select id="publish" defaultValue="Anyone on this site"><option>Anyone on this site</option></select>
              <svg width="42" height="20" viewBox="0 0 42 20" aria-hidden="true">
                <path d="M14 8l6 6 6-6" fill="none" stroke="#111" strokeWidth="3" />
              </svg>
            </Picker>
          </Form>
        </Fieldset>
      </Columns>

      <ScrollThumb />

      <Overlay $x={526} $y={448} width="30" height="44" viewBox="0 0 30 44" aria-hidden="true">
        <path d="M2 3v32l7-6 6 13 6-3-6-12h10z" fill="#000" stroke="#e4e4e4" strokeWidth="2" />
      </Overlay>

      <Overlay $x={339} $y={440} width="1140" height="400" viewBox="340 440 1140 400" aria-hidden="true">
        <g stroke="#ea0808" strokeWidth="8">
          <path d="M404 796L364 817M946 444L904 466M915 723L874 710M1466 681L1430 655" />
        </g>
        <g fill="#ea0808">
          <path d="M346 827l15-19 9 17zM886 475l14-19 9 18zM856 704l23-3-6 19zM1416 644l23 4-12 17z" />
        </g>
      </Overlay>
      <Callout $x={402} $y={742}>1</Callout>
      <Callout $x={943} $y={390}>2</Callout>
      <Callout $x={912} $y={696}>3</Callout>
      <Callout $x={1462} $y={668}>4</Callout>
    </Window>
  );
}
